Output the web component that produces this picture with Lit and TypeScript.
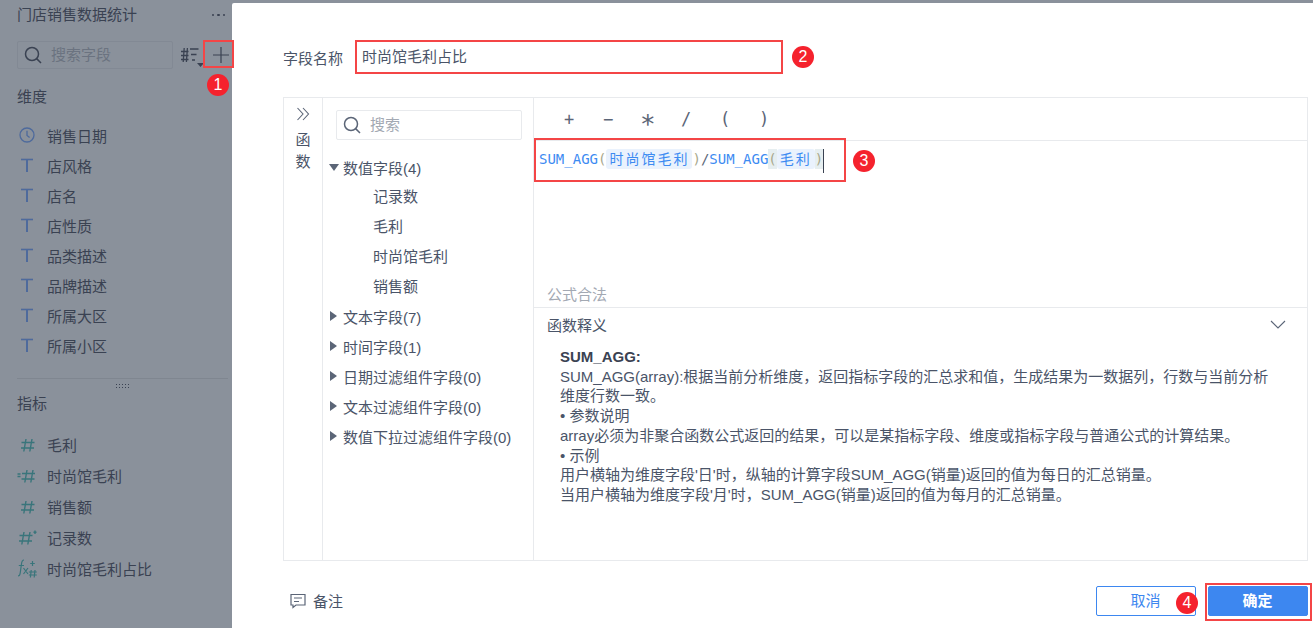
import { LitElement, html, css, svg } from 'lit';
import { customElement } from 'lit/decorators.js';

const search = svg`<circle cx="8" cy="8" r="6.5" fill="none" stroke="currentColor" stroke-width="1.5"/><path d="M12.6 12.6 17 17" fill="none" stroke="currentColor" stroke-width="1.5"/>`;

const icons: Record<string, unknown> = {
  clock: html`<svg width="16" height="16" viewBox="0 0 16 16" fill="none" stroke="#4e6a9c" stroke-width="1.3"><circle cx="8" cy="8" r="7"/><path d="M8 3.8V8.4L10.6 10.6"/></svg>`,
  text: html`<svg width="16" height="16" viewBox="0 0 16 16" fill="none" stroke="#4e6a9c"><path stroke-width="1.6" d="M2 2.5H14"/><path stroke-width="2" d="M8 2.5V15"/></svg>`,
  num: html`<svg width="20" height="16" viewBox="0 0 20 16" fill="none" stroke="#39757b" stroke-width="1.4"><path d="M9 2 6.8 14.5M15 2 12.8 14.5M4.5 5.5H17.5M4 11H17"/></svg>`,
  calc: html`<svg width="20" height="16" viewBox="0 0 20 16" fill="none" stroke="#39757b" stroke-width="1.4"><path d="M10 2 7.8 14.5M16 2 13.8 14.5M5 5.5H18M4.5 11H17.5M0.5 6H3.5M0.5 8.5H3.5"/></svg>`,
  star: html`<svg width="20" height="16" viewBox="0 0 20 16" fill="none" stroke="#39757b" stroke-width="1.4"><path d="M7 2 4.8 14.5M13 2 10.8 14.5M2.5 5.5H15.5M2 11H15M18 0.5V4M16.5 2.2H19.5"/></svg>`,
  fx: html`<svg width="20" height="19" viewBox="0 0 20 19" fill="none" stroke="#39757b" stroke-width="1.2"><path d="M7 1C5 1 4.7 2.5 4.4 5.5L3.2 14C3 16 2 17 1 17M1.8 6.5H7M6.5 9 11 15M11 9 6.5 15M15.5 2V7M13.2 4.5H17.8M14.2 11 13.4 18.5M18 11 17.2 18.5M11.8 13H19.8M11.8 16H19.8"/></svg>`,
};

const dims = [
  ['clock', '销售日期'], ['text', '店风格'], ['text', '店名'], ['text', '店性质'],
  ['text', '品类描述'], ['text', '品牌描述'], ['text', '所属大区'], ['text', '所属小区'],
];
const metrics = [
  ['num', '毛利'], ['calc', '时尚馆毛利'], ['num', '销售额'], ['star', '记录数'], ['fx', '时尚馆毛利占比'],
];
const groups = ['文本字段(7)', '时间字段(1)', '日期过滤组件字段(0)', '文本过滤组件字段(0)', '数值下拉过滤组件字段(0)'];

@customElement('app-root')
export class AppRoot extends LitElement {
  static styles = css`
    :host {
      display: flex;
      position: relative;
      width: 1313px;
      height: 628px;
      overflow: hidden;
      font-family: "Liberation Sans", "Noto Sans CJK SC", sans-serif;
      font-size: 15px;
      color: #4a5468;
      background: #8a919b;
    }

    /* dimmed field panel */
    .side {
      width: 232px;
      flex: none;
      box-sizing: border-box;
      padding: 5px 0 0 17px;
      color: #3a4252;
    }
    .side-title {
      display: flex;
      justify-content: space-between;
      padding-right: 7px;
      height: 20px;
      line-height: 20px;
    }
    .dots { display: flex; gap: 3px; align-items: center; }
    .dots i { width: 2.5px; height: 2.5px; border-radius: 50%; background: #3a4252; }
    .tools {
      display: flex;
      align-items: center;
      margin-top: 15px;
      height: 30px;
    }
    .side-search {
      width: 156px;
      height: 28px;
      flex: none;
      box-sizing: border-box;
      border: 1px solid #828994;
      border-radius: 2px;
      display: flex;
      align-items: center;
      gap: 9px;
      padding: 0 0 4px 6px;
      color: #6b7380;
    }
    .side-search svg { color: #3a4252; margin-top: 4px; }
    .sort { margin: 3px 0 0 8px; flex: none; color: #3a4252; display: block; }
    .plus { margin-left: 9px; flex: none; color: #3a4252; display: block; }
    .head { margin-top: 17px; height: 20px; line-height: 20px; }
    .rows { margin-top: 13px; }
    .row { display: flex; align-items: center; height: 30px; }
    .row .ico { width: 30px; flex: none; display: flex; align-items: center; padding-left: 2px; box-sizing: border-box; }
    .metrics .row { height: 31px; }
    .metrics .ico { padding-left: 0; }
    .rows.metrics { margin-top: 15px; }
    .split {
      margin: 18px 4px 0 0;
      border-top: 1px solid #7f8690;
      height: 0;
      display: flex;
      justify-content: center;
    }
    .grip {
      margin-top: 4px;
      width: 15px;
      height: 6px;
      flex: none;
      background-image: radial-gradient(#3a4252 0.7px, transparent 0.8px);
      background-size: 3px 3px;
    }
    .head.second { margin-top: 15px; }

    /* modal */
    .modal {
      flex: 1;
      margin-top: 3px;
      background: #fff;
      box-sizing: border-box;
      padding: 37px 5px 0 51px;
      border-top-left-radius: 2px;
    }
    .name { display: flex; align-items: center; height: 34px; }
    .name label { width: 72px; flex: none; }
    .name-input {
      width: 428px;
      height: 34px;
      line-height: 34px;
      box-sizing: border-box;
      padding-left: 7px;
      color: #4a5468;
    }
    .editor {
      margin-top: 23px;
      height: 464px;
      box-sizing: border-box;
      border: 1px solid #e8eaed;
      display: flex;
    }
    .fn-tab {
      width: 39px;
      flex: none;
      border-right: 1px solid #e8eaed;
      display: flex;
      flex-direction: column;
      align-items: center;
      padding-top: 9px;
      box-sizing: border-box;
      line-height: 22px;
    }
    .fn-tab svg { margin-bottom: 8px; }
    .tree {
      width: 211px;
      flex: none;
      border-right: 1px solid #e8eaed;
      box-sizing: border-box;
      padding: 12px 11px 0 13px;
    }
    .tree-search {
      height: 30px;
      box-sizing: border-box;
      border: 1px solid #e8eaed;
      border-radius: 2px;
      display: flex;
      align-items: center;
      gap: 9px;
      padding: 0 0 4px 6px;
      color: #a3a9b3;
    }
    .tree-search svg { color: #5b6577; margin-top: 4px; }
    .tree-list { margin: 12px 0 0 -8px; }
    .groups { margin-top: -1px; }
    .node { display: flex; align-items: center; height: 30px; gap: 3px; white-space: nowrap; }
    .leaf { height: 30px; line-height: 30px; padding-left: 45px; }
    .tri-d { width: 0; height: 0; margin: 0 1px; border: 5px solid transparent; border-top: 7px solid #5b6577; border-bottom: 0; }
    .tri-r { width: 0; height: 0; margin: 0 3px 0 2px; border: 5px solid transparent; border-left: 7px solid #5b6577; border-right: 0; }
    .main { flex: 1; display: flex; flex-direction: column; min-width: 0; }
    .ops {
      height: 42px;
      flex: none;
      border-bottom: 1px solid #e8eaed;
      display: flex;
      align-items: center;
      padding-left: 28px;
      gap: 25px;
      font-family: "DejaVu Sans Mono", monospace;
      font-size: 17px;
      color: #5b6577;
    }
    .ops span { width: 14px; text-align: center; }
    .ops .mul { font-size: 26px; line-height: 20px; }
    .formula {
      height: 130px;
      flex: none;
      box-sizing: border-box;
      padding: 8px 0 0 5px;
      font-family: "DejaVu Sans Mono", "Noto Sans CJK SC", monospace;
      font-size: 14px;
      line-height: 20px;
      color: #3d8bf2;
      display: flex;
      align-items: flex-start;
      white-space: nowrap;
    }
    .formula .p { color: #a8a88c; }
    .formula .p.match { background: #e6eef0; }
    .formula .s { color: #5b6577; }
    .chip { background: #eaf2fd; border-radius: 3px; padding: 0 3px; letter-spacing: 2px; }
    .caret { width: 1px; height: 24px; background: #3a4252; }
    .valid {
      height: 37px;
      flex: none;
      box-sizing: border-box;
      border-bottom: 1px solid #e8eaed;
      padding: 14px 0 0 13px;
      line-height: 20px;
      color: #a3a9b3;
    }
    .desc-head {
      display: flex;
      justify-content: space-between;
      align-items: center;
      height: 31px;
      padding: 1px 21px 0 13px;
      box-sizing: border-box;
    }
    .desc {
      padding: 8px 26px 0 26px;
      line-height: 19.7px;
    }
    .desc b { color: #3a4252; display: block; }
    .foot {
      display: flex;
      align-items: center;
      margin-top: 25px;
      height: 30px;
    }
    .note { display: flex; align-items: center; gap: 6px; margin-left: 6px; padding-bottom: 1px; }
    .btns { margin-left: auto; display: flex; gap: 12px; }
    .btn {
      width: 100px;
      height: 30px;
      box-sizing: border-box;
      border-radius: 2px;
      display: flex;
      align-items: center;
      justify-content: center;
      padding: 0 1px 3px 0;
      border: 1px solid #3d87f0;
      color: #3d87f0;
    }
    .btn.primary { background: #3d87f0; color: #fff; font-weight: bold; }

    /* annotations over the screenshot */
    .box { position: absolute; border: 2px solid #f44546; box-sizing: border-box; }
    .badge {
      position: absolute;
      width: 22px;
      height: 22px;
      border-radius: 50%;
      background: #f5222d;
      color: #fff;
      font-size: 16px;
      line-height: 22px;
      text-align: center;
    }
  `;

  render() {
    return html`
      <div class="side">
        <div class="side-title">门店销售数据统计<span class="dots"><i></i><i></i><i></i></span></div>
        <div class="tools">
          <div class="side-search"><svg width="18" height="18" viewBox="0 0 18 18">${search}</svg>搜索字段</div>
          <svg class="sort" width="23" height="20" viewBox="0 0 23 20" fill="none" stroke="currentColor" stroke-width="1.3">
            <path d="M3.2 1 2.2 15M6.4 1 5.4 15M0 4.5H7.5M0 8.5H7.5M0 12.5H7.5M9 2H17.5M10 7.5H15.5M11 13H14"/>
            <path d="M16 16H23L19.5 20Z" fill="currentColor" stroke="none"/>
          </svg>
          <svg class="plus" width="16" height="16" viewBox="0 0 16 16" fill="none" stroke="currentColor" stroke-width="1.2"><path d="M8 0V16M0 8H16"/></svg>
        </div>
        <div class="head">维度</div>
        <div class="rows">
          ${dims.map(([i, t]) => html`<div class="row"><span class="ico">${icons[i]}</span>${t}</div>`)}
        </div>
        <div class="split"><span class="grip"></span></div>
        <div class="head second">指标</div>
        <div class="rows metrics">
          ${metrics.map(([i, t]) => html`<div class="row"><span class="ico">${icons[i]}</span>${t}</div>`)}
        </div>
      </div>

      <div class="modal">
        <div class="name">
          <label>字段名称</label>
          <div class="name-input">时尚馆毛利占比</div>
        </div>
        <div class="editor">
          <div class="fn-tab">
            <svg width="14" height="14" viewBox="0 0 14 14" fill="none" stroke="#5b6577" stroke-width="1.1"><path d="M1.5 1 7 7 1.5 13M7 1 12.5 7 7 13"/></svg>
            <span>函</span><span>数</span>
          </div>
          <div class="tree">
            <div class="tree-search"><svg width="18" height="18" viewBox="0 0 18 18">${search}</svg>搜索</div>
            <div class="tree-list">
              <div class="node"><i class="tri-d"></i>数值字段(4)</div>
              ${['记录数', '毛利', '时尚馆毛利', '销售额'].map(t => html`<div class="leaf">${t}</div>`)}
              <div class="groups">
                ${groups.map(t => html`<div class="node"><i class="tri-r"></i>${t}</div>`)}
              </div>
            </div>
          </div>
          <div class="main">
            <div class="ops">
              <span>+</span><span>−</span><span class="mul">∗</span><span>/</span><span>(</span><span>)</span>
            </div>
            <div class="formula">
              SUM_AGG<span class="p">(</span><span class="chip">时尚馆毛利</span><span class="p">)</span><span class="s">/</span>SUM_AGG<span class="p match">(</span><span class="chip">毛利</span><span class="p match">)</span><i class="caret"></i>
            </div>
            <div class="valid">公式合法</div>
            <div class="desc-head">
              函数释义
              <svg width="16" height="9" viewBox="0 0 16 9" fill="none" stroke="#5b6577" stroke-width="1.1"><path d="M1 1 8 8 15 1"/></svg>
            </div>
            <div class="desc">
              <b>SUM_AGG:</b>
              SUM_AGG(array):根据当前分析维度，返回指标字段的汇总求和值，生成结果为一数据列，行数与当前分析维度行数一致。<br>
              • 参数说明<br>
              array必须为非聚合函数公式返回的结果，可以是某指标字段、维度或指标字段与普通公式的计算结果。<br>
              • 示例<br>
              用户横轴为维度字段'日'时，纵轴的计算字段SUM_AGG(销量)返回的值为每日的汇总销量。<br>
              当用户横轴为维度字段'月'时，SUM_AGG(销量)返回的值为每月的汇总销量。
            </div>
          </div>
        </div>
        <div class="foot">
          <div class="note">
            <svg width="18" height="18" viewBox="0 0 18 18" fill="none" stroke="#5b6577" stroke-width="1.2"><path d="M2 2.5H16V13H7L4 15.5V13H2ZM5 6H13M5 9.5H10"/></svg>
            备注
          </div>
          <div class="btns">
            <div class="btn">取消</div>
            <div class="btn primary">确定</div>
          </div>
        </div>
      </div>

      <div class="box" style="left:203px;top:40px;width:31px;height:28px"></div>
      <div class="box" style="left:355px;top:40px;width:428px;height:34px"></div>
      <div class="box" style="left:534px;top:138px;width:312px;height:44px"></div>
      <div class="box" style="left:1205px;top:583px;width:107px;height:38px"></div>
      <div class="badge" style="left:207px;top:74px">1</div>
      <div class="badge" style="left:792px;top:46px">2</div>
      <div class="badge" style="left:853px;top:150px">3</div>
      <div class="badge" style="left:1176px;top:592px">4</div>
    `;
  }
}
